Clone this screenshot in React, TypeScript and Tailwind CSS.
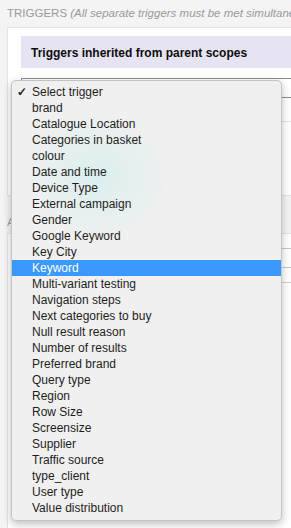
import React from "react";

const triggers = [
  "Select trigger",
  "brand",
  "Catalogue Location",
  "Categories in basket",
  "colour",
  "Date and time",
  "Device Type",
  "External campaign",
  "Gender",
  "Google Keyword",
  "Key City",
  "Keyword",
  "Multi-variant testing",
  "Navigation steps",
  "Next categories to buy",
  "Null result reason",
  "Number of results",
  "Preferred brand",
  "Query type",
  "Region",
  "Row Size",
  "Screensize",
  "Supplier",
  "Traffic source",
  "type_client",
  "User type",
  "Value distribution",
];

export default function App() {
  const selected = "Select trigger";
  const hovered = "Keyword";

  return (
    <div
      className="relative w-[291px] h-[528px] overflow-hidden bg-[#f4f4f4]"
      style={{ fontFamily: '"Liberation Sans", Arial, sans-serif' }}
    >
      {/* Page behind the menu */}
      <div className="pl-[7px] pt-[6px]">
        <div className="h-[15px] text-[11.5px] leading-[15px] text-[#9a9a9a] whitespace-nowrap">
          TRIGGERS <i className="text-[#9a9a9a]">(All separate triggers must be met simultaneously)</i>
        </div>
        <div className="mt-[6px] bg-white border border-[#e4e4e4] border-r-0 h-[169px] pl-[13px] pt-[8px]">
          <div className="h-[32px] bg-[#e6e4f3] flex items-center pl-[10px] pt-[1px] text-[12px] font-bold text-[#0d0d0d] whitespace-nowrap">
            Triggers inherited from parent scopes
          </div>
          <div className="mt-[10px] h-[20px] border border-[#8c8c8c] border-r-0 bg-white" />
          <div className="mt-[23px] border-t border-[#e6e6e6]" />
        </div>
        <div className="mt-[19px] h-[14px] text-[11.5px] leading-[14px] text-[#9a9a9a]">A</div>
        <div className="mt-[4px] bg-white border border-[#e4e4e4] border-r-0 h-[300px] pl-[13px] pt-[14px]">
          <div className="h-[20px] border border-[#c8c8c8] border-r-0 bg-white" />
          <div className="mt-[14px] border-t border-[#d0d0d0]" />
        </div>
      </div>

      {/* Native select dropdown */}
      <div className="absolute left-[11px] top-[80px] w-[271px] rounded-[5px] bg-[#f0f0f0] border border-[#c4c4c4] shadow-[0_3px_8px_rgba(0,0,0,0.25)] pt-[3px] pb-[4px] overflow-hidden">
        <div className="pointer-events-none absolute left-[10px] top-[30px] w-[150px] h-[130px] rounded-full bg-[radial-gradient(closest-side,rgba(200,238,236,0.55),rgba(240,240,240,0))]" />
        {triggers.map((t) => (
          <div
            key={t}
            className={`relative flex items-center h-[16px] text-[12px] whitespace-nowrap ${
              t === hovered ? "bg-[#3b99fc] text-white" : "text-[#1e1e1e]"
            }`}
          >
            <span className="w-[20px] pl-[5px] text-[12px] font-bold">{t === selected ? "✓" : ""}</span>
            <span>{t}</span>
          </div>
        ))}
      </div>
    </div>
  );
}
